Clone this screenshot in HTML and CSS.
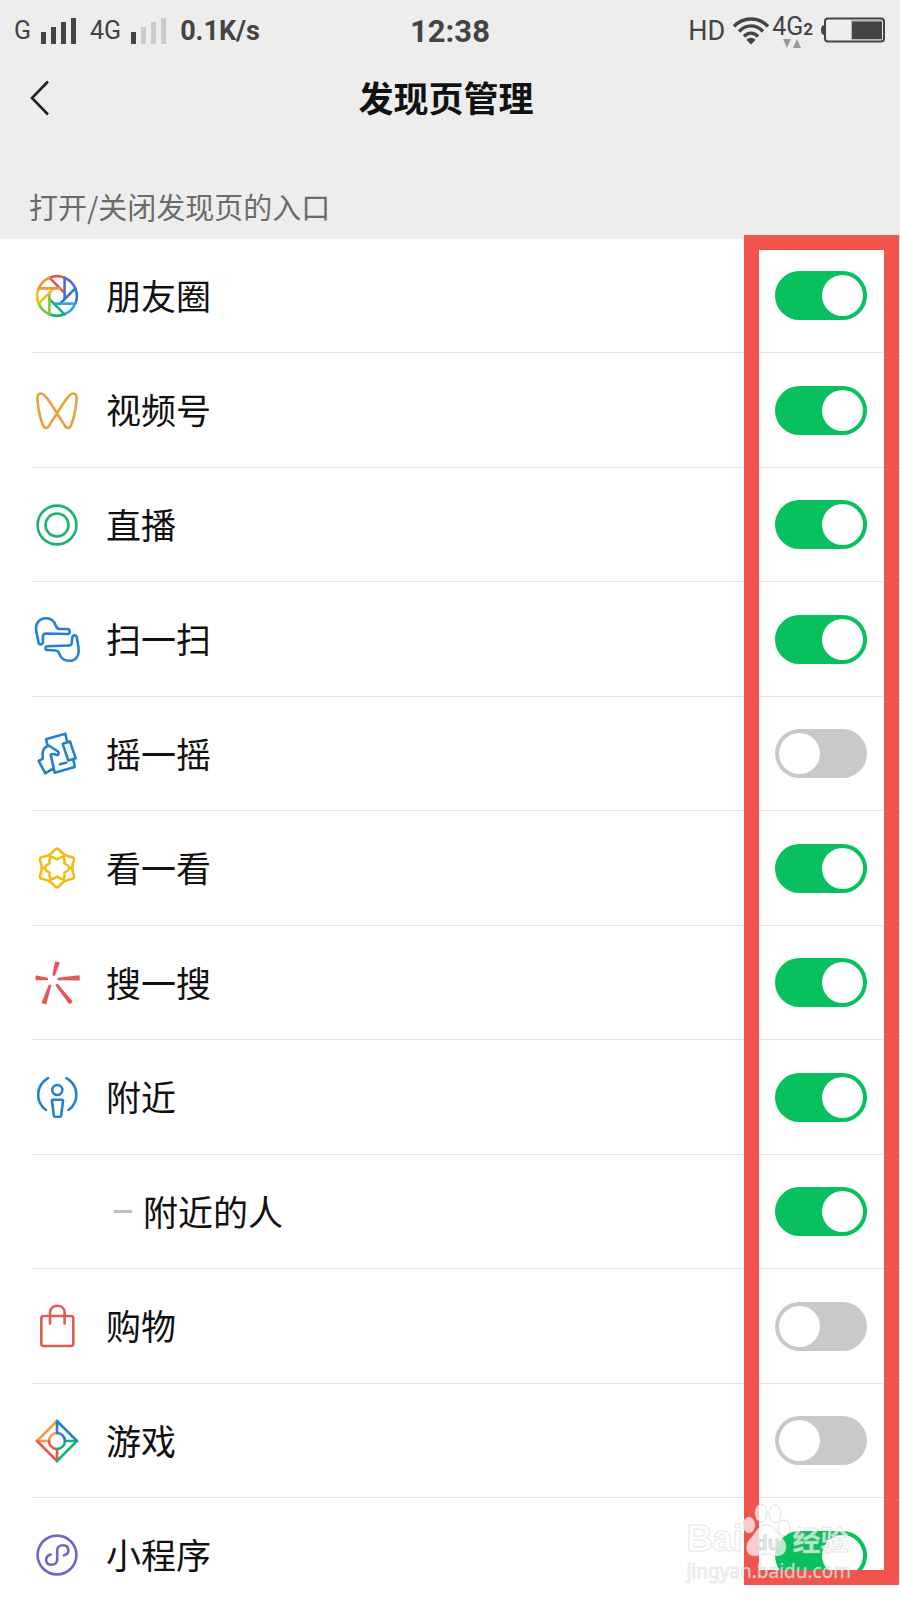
FILE: index.html
```html
<!DOCTYPE html>
<html lang="zh-CN">
<head>
<meta charset="utf-8">
<meta name="viewport" content="width=device-width, initial-scale=1">
<title>发现页管理</title>
<link rel="stylesheet" href="styles.css">
</head>
<body>
<div class="screen">
  <div class="status">
    <div class="status-left">
      <span class="net">G</span>
      <svg class="bars" width="36" height="26" viewBox="0 0 36 26" fill="#444"><path d="M0 14h5v12H0zM10 9h5v17h-5zM20 4h5v22h-5zM30 0h5v26h-5z"/></svg>
      <span class="net">4G</span>
      <svg class="bars" width="36" height="26" viewBox="0 0 36 26" fill="#ccc"><path fill="#444" d="M0 14h5v12H0z"/><path d="M10 9h5v17h-5zM20 4h5v22h-5zM30 0h5v26h-5z"/></svg>
      <span class="speed">0.1K/s</span>
    </div>
    <time class="clock">12:38</time>
    <div class="status-right">
      <span class="hd">HD</span>
      <svg width="38" height="28" viewBox="0 0 38 28" fill="none" stroke="#444" stroke-width="3.400"><path d="M2 9.500C11-.5 27-.5 36 9.500M7 14.500C14 7 24 7 31 14.500M12 19.500c4-4.500 10-4.500 14 0"/><path d="M14.500 23c2-3 7-3 9 0L19 27.500z" fill="#444" stroke="none"/></svg>
      <div class="sim">
        <span class="net">4G</span><span class="sim-no">2</span>
        <svg class="arrows" width="20" height="9" viewBox="0 0 20 9" fill="#999"><path d="M1 0h8L5 9zM11 9h8l-4-9z"/></svg>
      </div>
      <svg class="battery" width="66" height="26" viewBox="0 0 66 26"><path d="M4 8C0 8 0 18 4 18z" fill="#444"/><rect x="5" y="1.500" width="59" height="23" rx="3" fill="#eee" stroke="#444" stroke-width="2"/><path d="M31 3h31v20H31z" fill="#bbb"/><path d="M32 4.500h30v17.500H32z" fill="#444"/></svg>
    </div>
  </div>

  <header class="nav">
    <button class="back" type="button" aria-label="返回"><svg width="20" height="36" viewBox="0 0 20 36" fill="none" stroke="#222" stroke-width="2.600"><path d="M18 1.500 2 18l16 16.500"/></svg></button>
    <h1 class="title">发现页管理</h1>
  </header>

  <main class="panel">
    <h2 class="caption">打开/关闭发现页的入口</h2>
    <ul class="list">
      <li class="row">
        <svg class="icon" viewBox="-25 -25 50 50">
          <defs><path id="blade" d="M7.600 3.100V-18.300A19.800 19.800 0 0 1 18.300-7.570"/></defs>
          <use href="#blade" stroke="#e9524f" transform="rotate(-45)"/><use href="#blade" stroke="#6166d6"/><use href="#blade" stroke="#2479cc" transform="rotate(45)"/><use href="#blade" stroke="#35a5e6" transform="rotate(90)"/><use href="#blade" stroke="#14b678" transform="rotate(135)"/><use href="#blade" stroke="#7cc642" transform="rotate(180)"/><use href="#blade" stroke="#e6c414" transform="rotate(225)"/><use href="#blade" stroke="#ef963a" transform="rotate(270)"/>
        </svg>
        <label class="name" for="moments">朋友圈</label>
        <input class="switch" type="checkbox" role="switch" id="moments" checked>
      </li>
      <li class="row">
        <svg class="icon" viewBox="0 0 50 50" stroke="#e9a045"><path d="M25 28.500C19 18.500 13 8.500 9 8.500 5.500 8.500 5 12 5.500 16 6.300 26 9.500 38.500 12 42 13.500 44 16 43 18 39.500 20 35.500 23 32 25 28.500 31 18.500 37 8.500 41 8.500 44.500 8.500 45 12 44.500 16 43.700 26 40.500 38.500 38 42 36.500 44 34 43 32 39.500 30 35.500 27 32 25 28.500Z"/></svg>
        <label class="name" for="channels">视频号</label>
        <input class="switch" type="checkbox" role="switch" id="channels" checked>
      </li>
      <li class="row">
        <svg class="icon" viewBox="0 0 50 50" stroke="#1fb268"><circle cx="25" cy="25" r="19.400"/><circle cx="25" cy="25" r="11.500"/></svg>
        <label class="name" for="live">直播</label>
        <input class="switch" type="checkbox" role="switch" id="live" checked>
      </li>
      <li class="row">
        <svg class="icon" viewBox="0 0 50 50" stroke="#2480d0"><path d="M6.500 29C6 23 4 19 4 14.500 4 8 8.500 4.200 14 4.200 19.500 4.200 22.500 7.500 24 12 24.700 14.300 25.500 15 28 15H35.300C38.500 15 38.500 20 35.300 20L14 19.500Q11 19.500 10.900 22.500V28C10.700 31 7 31 6.500 29ZM15.300 32.300 37 31.500Q39.500 31.500 39.700 29L40.300 24C40.700 20.500 44.300 20.500 44.800 23.500 45.300 28 46.700 32 46.700 37 46.700 43 43 46.800 38 46.800 31.500 46.800 28.500 44 27.300 39.500 26.500 37 25.500 36.500 23.500 36.500L15.300 36C13 36 13 32.300 15.300 32.300Z"/></svg>
        <label class="name" for="scan">扫一扫</label>
        <input class="switch" type="checkbox" role="switch" id="scan" checked>
      </li>
      <li class="row">
        <svg class="icon" viewBox="0 0 50 50" stroke="#2480d0"><path d="M15.500 16 14 10.300 33.300 4.700 35 12M41.500 31.500 42.700 38 22.700 43.700 18.700 25.700C21 24.500 23 25 24.500 26 26.500 26.500 27.500 24 26 22.500L16.800 16.500C13 18 10.700 20.500 10.700 24V29.700L6.700 32 13.300 44.300 21 39.500M30.700 14.800 38 12.500 43.700 29.300 36.300 31.500ZM28 35.300 34 33.700"/></svg>
        <label class="name" for="shake">摇一摇</label>
        <input class="switch" type="checkbox" role="switch" id="shake">
      </li>
      <li class="row">
        <svg class="icon" viewBox="-25 -25 50 50" stroke="#f2bc12">
          <defs><path id="petal" d="M-1.500-18.800Q0-20 1.500-18.800C3.500-16.500 5.500-14.500 7.600-13.200L6.500-11.300Q3-11 0-8.700-3-11-6.500-11.300L-7.600-13.200C-5.500-14.500-3.500-16.500-1.500-18.800Z"/></defs>
          <use href="#petal"/><use href="#petal" transform="rotate(60)"/><use href="#petal" transform="rotate(120)"/><use href="#petal" transform="rotate(180)"/><use href="#petal" transform="rotate(240)"/><use href="#petal" transform="rotate(300)"/>
        </svg>
        <label class="name" for="look">看一看</label>
        <input class="switch" type="checkbox" role="switch" id="look" checked>
      </li>
      <li class="row">
        <svg class="icon ray" viewBox="0 0 50 50"><path d="M23.500 4.300 27 5 22.500 17H21ZM4.300 18.300V21.500L15.300 21.500V20.500ZM26 20.500V21.500L47 21.700V18ZM17.300 27.200 18.500 27.700 13.700 45.700 10.300 44.700ZM24.200 27.300 25.300 26.500 40 43.700 37.500 45.400Z"/></svg>
        <label class="name" for="search">搜一搜</label>
        <input class="switch" type="checkbox" role="switch" id="search" checked>
      </li>
      <li class="row">
        <svg class="icon" viewBox="0 0 50 50" stroke="#2480d0"><path d="M16 6.200C3.500 13.500 3 30 14 38M34.500 6.200C47 13.500 47.500 30 36.500 38M21 27.700H30Q31.200 27.700 31 29L29.200 43.500Q29 44.800 28 44.800H23Q22 44.800 21.800 43.500L20 29Q19.800 27.700 21 27.700Z"/><circle cx="25.300" cy="18" r="5"/></svg>
        <label class="name" for="nearby">附近</label>
        <input class="switch" type="checkbox" role="switch" id="nearby" checked>
      </li>
      <li class="row row-sub">
        <span class="dash"></span>
        <label class="name" for="people">附近的人</label>
        <input class="switch" type="checkbox" role="switch" id="people" checked>
      </li>
      <li class="row">
        <svg class="icon" viewBox="0 0 50 50" stroke="#e25a56"><rect x="9.300" y="15" width="32" height="30" rx="2.500"/><path d="M18 22.500V11.500C18 2.500 32.600 2.500 32.600 11.500V22.500"/></svg>
        <label class="name" for="shop">购物</label>
        <input class="switch" type="checkbox" role="switch" id="shop">
      </li>
      <li class="row">
        <svg class="icon" viewBox="-25 -25 50 50"><path stroke="#eda044" d="M0-20-20 0H-8A8 8 0 0 1 0-8"/><path stroke="#e8554f" d="M-20 0 0 20V8A8 8 0 0 1-8 0"/><path stroke="#16b573" d="M0 20 20 0H8A8 8 0 0 1 0 8"/><path stroke="#2480d0" d="M20 0 0-20V-8A8 8 0 0 1 8 0"/></svg>
        <label class="name" for="games">游戏</label>
        <input class="switch" type="checkbox" role="switch" id="games">
      </li>
      <li class="row">
        <svg class="icon" viewBox="0 0 50 50" stroke="#6a68cf"><circle cx="25" cy="25" r="19.400"/><path d="M18.700 24.500C12 26.500 13 34.700 19.500 34.700 23 34.700 25.200 32.500 25.200 29.700V20.500C25.200 17.500 27.500 15.300 30.700 15.300 37.500 15.300 38.500 23.500 32 25.300"/></svg>
        <label class="name" for="mini">小程序</label>
        <input class="switch" type="checkbox" role="switch" id="mini" checked>
      </li>
    </ul>
  </main>

  <div class="frame"></div>

  <div class="mark">
    <div class="mark-top">
      <span class="mark-bai">Bai</span>
      <span class="mark-paw">
        <svg width="50" height="56" viewBox="0 0 50 56"><ellipse cx="7" cy="22" rx="6" ry="8"/><ellipse cx="19" cy="10" rx="6" ry="9"/><ellipse cx="33" cy="11" rx="6" ry="9"/><ellipse cx="42" cy="25" rx="6" ry="8"/><path d="M24 22C33 22 36 32 41 36 47 43 44 53 35 53 30 53 27 51 24 51S18 53 13 53C4 53 2 43 8 36 13 32 15 22 24 22Z"/></svg>
        <span class="mark-du">du</span>
      </span>
      <span class="mark-cn">经验</span>
    </div>
    <div class="mark-url">jingyan.baidu.com</div>
  </div>
</div>
</body>
</html>
```
FILE: styles.css
```css
* {
  box-sizing: border-box;
}

body {
  margin: 0;
  background: #fff;
  color: #111;
  font-family: Roboto, "Noto Sans CJK SC", sans-serif;
}

.screen {
  position: relative;
  height: 100vh;
  overflow: hidden;
  background: #ededed;
}

/* Status bar */

.status {
  display: grid;
  grid-template-columns: 1fr auto 1fr;
  align-items: center;
  height: 60px;
  padding: 2px 14px 0;
  color: #444;
}

.status-left,
.status-right {
  display: flex;
  align-items: center;
}

.status-left {
  gap: 10px;
}

.status-right {
  justify-content: flex-end;
  gap: 2px;
}

.net {
  font-size: 25px;
  line-height: 30px;
}

.bars {
  margin-right: 3px;
}

.speed {
  font-size: 27px;
  font-weight: 700;
}

.clock {
  font-size: 31px;
  font-weight: 700;
}

.hd {
  margin-right: 5px;
  font-size: 27px;
}

.battery {
  margin-left: 5px;
  margin-bottom: 2px;
}

.sim {
  position: relative;
  display: flex;
  align-items: baseline;
  padding-bottom: 8px;
}

.sim-no {
  font-size: 17px;
  font-weight: 700;
}

.arrows {
  position: absolute;
  left: 10px;
  bottom: 2px;
}

/* Title bar */

.nav {
  display: grid;
  grid-template-columns: 1fr auto 1fr;
  align-items: center;
  height: 76px;
  padding: 0 36px 0 28px;
}

.back {
  display: flex;
  justify-self: start;
  padding: 2px;
  border: 0;
  background: none;
}

.title {
  margin: 0;
  padding-bottom: 2px;
  font: 700 35px/52px "Noto Sans CJK SC", sans-serif;
}

/* Entry list */

.caption {
  margin: 0;
  padding: 48px 29px 11px;
  color: #6b6b6b;
  font: 400 29px/44px "Noto Sans CJK SC", sans-serif;
}

.list {
  margin: 0;
  padding: 0 0 0 32px;
  list-style: none;
  background: #fff;
}

.row {
  display: flex;
  align-items: center;
  gap: 24px;
  height: 114px;
  padding-right: 33px;
  border-bottom: 1px solid #e4e4e4;
}

.row:nth-child(even) {
  height: 115px;
}

.row-sub {
  gap: 11px;
  padding-left: 82px;
}

.icon {
  flex: none;
  width: 50px;
  height: 50px;
  fill: none;
  stroke-width: 2.6;
  stroke-linejoin: round;
  stroke-linecap: round;
}

.ray {
  fill: #e5565a;
  stroke: #e5565a;
  stroke-width: 1.4;
}

.dash {
  width: 18px;
  height: 3px;
  background: #bdbdbd;
}

.name {
  flex: 1;
  padding-bottom: 2px;
  font: 400 35px/52px "Noto Sans CJK SC", sans-serif;
}

.switch {
  appearance: none;
  flex: none;
  width: 92px;
  height: 49px;
  margin: 0;
  padding: 4px;
  border-radius: 25px;
  background: #c9c9c9;
}

.switch::before {
  content: "";
  display: block;
  width: 41px;
  height: 41px;
  border-radius: 50%;
  background: #fff;
}

.switch:checked {
  background: #09c05e;
}

.switch:checked::before {
  margin-left: auto;
}

/* Highlight frame over the switches */

.frame {
  position: absolute;
  top: 235px;
  right: 1px;
  bottom: 15px;
  width: 155px;
  border: 15px solid #f0544c;
  pointer-events: none;
}

/* Watermark */

.mark {
  position: absolute;
  right: 49px;
  bottom: 17px;
  color: rgba(255, 255, 255, 0.7);
  -webkit-text-stroke: 1px rgba(190, 190, 190, 0.4);
  pointer-events: none;
}

.mark-top {
  display: flex;
  align-items: flex-end;
  height: 56px;
}

.mark-bai {
  font: 700 36px/40px "Liberation Sans", sans-serif;
}

.mark-paw {
  position: relative;
  display: flex;
  fill: rgba(255, 255, 255, 0.7);
  stroke: rgba(190, 190, 190, 0.5);
}

.mark-du {
  position: absolute;
  left: 13px;
  bottom: 4px;
  color: rgba(225, 225, 225, 0.9);
  font: 700 20px/24px "Liberation Sans", sans-serif;
}

.mark-cn {
  font: 700 28px/40px "Noto Sans CJK SC", sans-serif;
}

.mark-url {
  font: 400 19px/24px "Noto Sans", sans-serif;
}
```
